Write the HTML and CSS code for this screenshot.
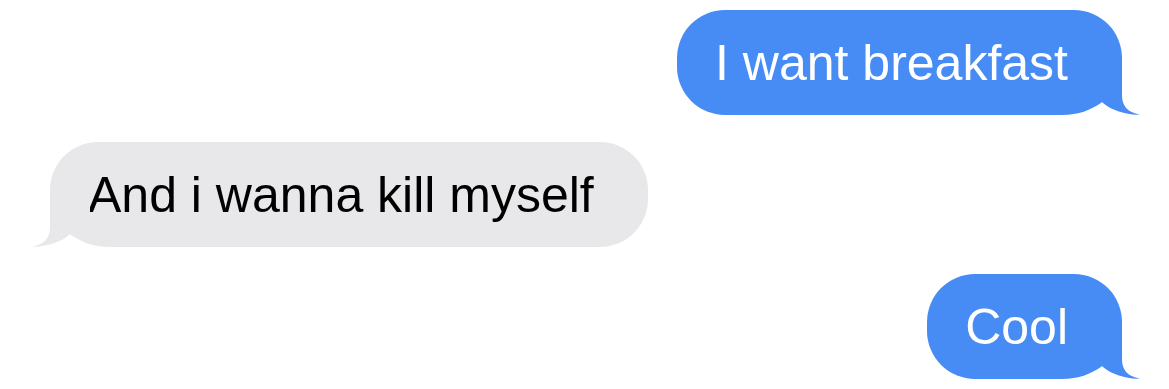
FILE: index.html
```html
<!DOCTYPE html>
<html lang="en">
<head>
<meta charset="utf-8">
<title>Messages</title>
<link rel="stylesheet" href="styles.css">
</head>
<body>
<main class="thread">
  <div class="bubble sent">
    <span class="text">I want breakfast</span>
    <svg class="tail" width="60" height="50" viewBox="0 0 60 50" aria-hidden="true"><path d="M0,0 L40,0 L40,30 C40,41 45,47 58,49.5 C47,50.5 30,46 21,38 L0,20 Z"/></svg>
  </div>
  <div class="bubble received">
    <span class="text">And i wanna kill myself</span>
    <svg class="tail" width="60" height="50" viewBox="0 0 60 50" aria-hidden="true"><path d="M0,0 L40,0 L40,30 C40,41 45,47 58,49.5 C47,50.5 30,46 21,38 L0,20 Z"/></svg>
  </div>
  <div class="bubble sent">
    <span class="text">Cool</span>
    <svg class="tail" width="60" height="50" viewBox="0 0 60 50" aria-hidden="true"><path d="M0,0 L40,0 L40,30 C40,41 45,47 58,49.5 C47,50.5 30,46 21,38 L0,20 Z"/></svg>
  </div>
</main>
</body>
</html>
```

FILE: styles.css
```css
html, body {
  margin: 0;
  padding: 0;
  background: #ffffff;
}

body {
  width: 1169px;
  height: 389px;
  overflow: hidden;
  font-family: "Liberation Sans", Arial, sans-serif;
}

.thread {
  display: flex;
  flex-direction: column;
  gap: 27px;
  padding: 10px 47px 0 50px;
}

.bubble {
  position: relative;
  box-sizing: border-box;
  height: 105px;
  padding: 1px 54px 0 38px;
  border-radius: 48px;
  font-size: 50px;
  line-height: 104px;
  white-space: nowrap;
}

.sent {
  align-self: flex-end;
  background: #478cf5;
  color: #ffffff;
  border-bottom-right-radius: 60px 50px;
}

.received {
  align-self: flex-start;
  background: #e8e8ea;
  color: #000000;
  border-bottom-left-radius: 60px 50px;
}

.tail {
  position: absolute;
  bottom: 0;
  display: block;
}

.sent .tail {
  right: -20px;
  fill: #478cf5;
}

.received .tail {
  left: -20px;
  fill: #e8e8ea;
  transform: scaleX(-1);
}
```
